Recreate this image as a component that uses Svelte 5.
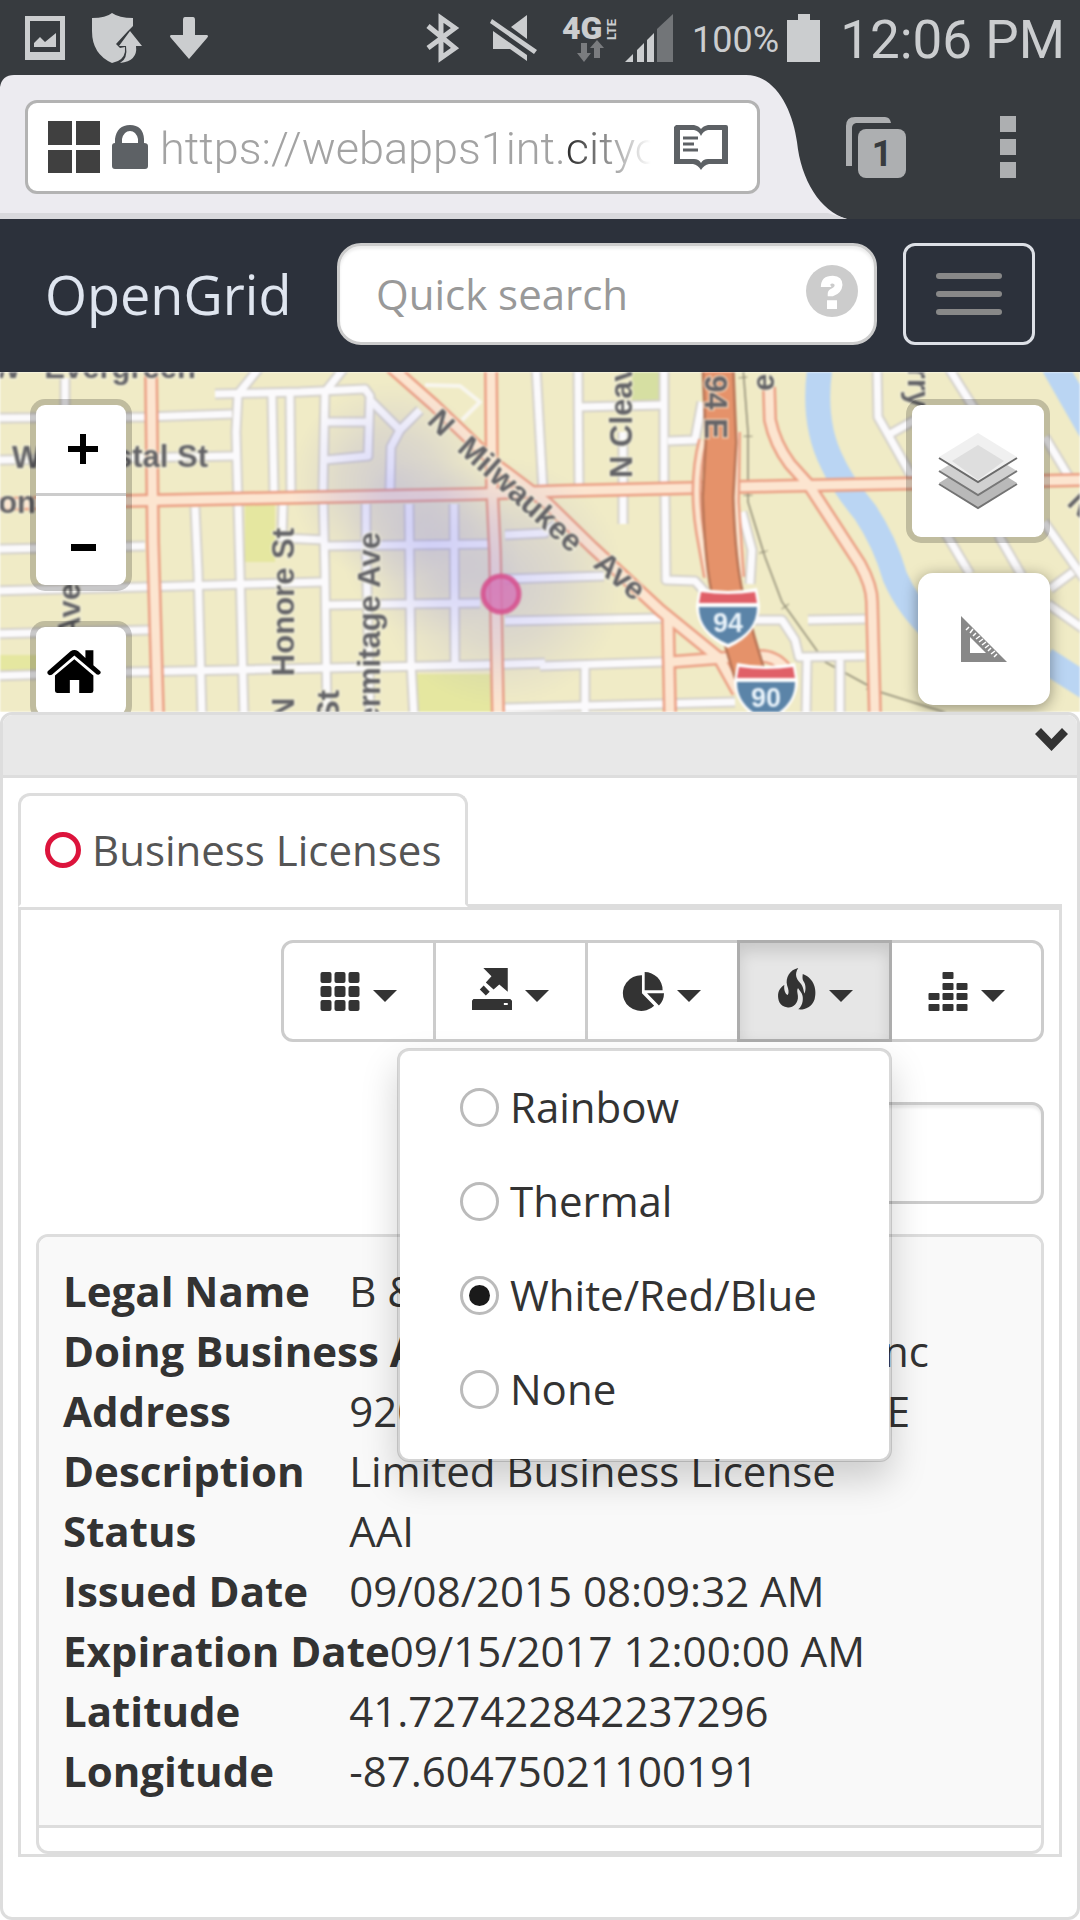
<script>
  let heat = $state('White/Red/Blue');
  const heatOptions = ['Rainbow', 'Thermal', 'White/Red/Blue', 'None'];

  const record = [
    ['Legal Name', 'B & M Transportation Inc'],
    ['Doing Business As', 'B & M Transportation Inc'],
    ['Address', '9206 S COTTAGE GROVE AVE'],
    ['Description', 'Limited Business License'],
    ['Status', 'AAI'],
    ['Issued Date', '09/08/2015 08:09:32 AM'],
    ['Expiration Date', '09/15/2017 12:00:00 AM'],
    ['Latitude', '41.727422842237296'],
    ['Longitude', '-87.60475021100191'],
  ];

  const tools = ['Columns', 'Export', 'Charts', 'Heat map', 'Graph'];

  const streets = [
    'M65 6 L65 200', 'M-5 46 L145 45 L232 42', 'M-5 88 L235 84', 'M-5 177 L145 174',
    'M-5 219 L145 215 L322 210', 'M-5 262 L150 258', 'M-5 304 L128 300 L480 293 L545 291',
    'M215 22 L300 20 L365 17 L370 24 L368 84 L325 88', 'M260 -5 L238 22 L236 60 L240 200 L244 345',
    'M272 22 L274 122', 'M290 22 L291 122', 'M345 -5 L325 20 L323 120 L325 200 L327 345',
    'M325 50 L368 50', 'M370 28 L400 58 L420 38', 'M400 58 L391 75 L390 118',
    'M283 133 L282 166 L325 168', 'M195 135 L198 200 L202 345', 'M366 132 L366 170 L370 345',
    'M409 132 L411 290 L414 345', 'M454 132 L455 292', 'M325 174 L490 172', 'M328 233 L480 231',
    'M505 163 L545 161 L556 152', 'M505 207 L604 204', 'M505 249 L662 246', 'M536 -5 L543 118',
    'M578 -5 L579 116', 'M664 -5 L664 116', 'M578 35 L662 33', 'M623 60 L623 152',
    'M665 124 L666 208 L695 209 L705 220', 'M668 69 L695 68 L702 30',
    'M877 -5 L878 45 L890 66 L912 105 L970 202', 'M890 62 L915 48', 'M948 -5 L975 38 L1000 166 L1022 204',
    'M1045 65 L1072 110', 'M1044 150 L1085 208', 'M1050 217 L1073 200', 'M1048 232 L1085 258',
    'M755 248 L782 248 L795 268 L799 285 L865 284', 'M808 248 L865 247', 'M540 294 L662 290',
    'M505 336 L735 330', 'M585 292 L585 345', 'M807 288 L806 345', 'M840 288 L840 345',
    'M742 140 L752 178 L750 212',
  ];
  const avenues = [
    'M151 -5 L153 170 L158 345', 'M-5 132 L126 129 L480 122 L560 119 L780 114 L1085 108',
    'M491 -5 L492 115 L495 180 L498 345', 'M383 -12 L434 33 L499 95 L547 131 L592 175 L660 238 L719 286 L738 320',
    'M668 243 L670 345', 'M670 290 L735 285', 'M769 15 L770 48 Q775 72 790 92 L808 112 L860 192 Q872 214 872 230 L875 345',
    'M760 284 Q775 284 785 296',
  ];
  const ramps = ['M703 68 Q692 110 700 160 L708 205', 'M736 60 L735 130 L740 205'];
  const labels = [
    { x: -8, y: 6, a: 0, t: 'W' },
    { x: 196, y: 6, a: 0, t: 'Evergreen', end: true },
    { x: 12, y: 96, a: 0, t: 'W' },
    { x: 208, y: 95, a: 0, t: 'Crystal St', end: true },
    { x: 36, y: 141, a: 0, t: 'W Division', end: true },
    { x: 80, y: 211, a: -90, t: 'N Wood Ave', end: true },
    { x: 294, y: 156, a: -90, t: 'Honore St', end: true },
    { x: 294, y: 348, a: -90, t: 'N' },
    { x: 339, y: 318, a: -90, t: 'N Wood St', end: true },
    { x: 380, y: 160, a: -90, t: 'N Hermitage Ave', end: true },
    { x: 632, y: 106, a: -90, t: 'N Cleaver St' },
    { x: 705, y: 67, a: 90, t: 'I 94 E', end: true },
    { x: 774, y: 19, a: -90, t: 'e' },
    { x: 908, y: 36, a: 90, t: 'N Cherry', end: true },
    { x: 426, y: 50, a: 45, t: 'N' },
    { x: 456, y: 78, a: 42, t: 'Milwaukee' },
    { x: 592, y: 194, a: 40, t: 'Ave' },
    { x: 1066, y: 132, a: 45, t: 'N' },
  ];
  const shields = [{ x: 697, y: 216, n: '94' }, { x: 735, y: 291, n: '90' }];
</script>

<div class="screen">
  <div class="status">
    <svg class="picture" viewBox="0 0 40 44"><path fill-rule="evenodd" d="M0 0H40V44H0ZM5 5V36H35V5Z"/><path d="M9 27L15 21 20 26 31 17V31H9Z"/></svg>
    <svg class="shield" viewBox="0 0 50 50"><path d="M0 5Q14 5 20 0 27 5 41 5V13L36 18 24 31 28 35 33 34Q34 44 26 48L20 50Q0 41 0 18Z"/><path d="M38 18L50 33H44Q46 48 28 50 36 46 34 33H27Z"/></svg>
    <svg class="down" viewBox="0 0 38 42"><path d="M15 0H23Q25 0 25 3V18H37Q39 19 37 21L19 42 1 21Q-1 19 1 18H13V3Q13 0 15 0Z"/></svg>
    <svg class="bluetooth" viewBox="0 0 33 48"><path d="M2 12L29 34 15 44V4L29 14 2 34" fill="none" stroke="currentColor" stroke-width="5"/></svg>
    <svg class="mute" viewBox="0 0 47 46"><path d="M37 0V24L21 12ZM3 16L37 40V46L20 34H3ZM2 4L47 35 44 39 0 8Z"/></svg>
    <svg class="network" viewBox="0 0 54 48"><text x="0" y="25" font-size="32" font-weight="900">4G</text><text transform="translate(54 26) rotate(-90)" font-size="13" font-weight="700">LTE</text><g opacity=".45"><path d="M19 29H25V39H29L22 48 15 39H19ZM32 44H38V34H42L35 26 28 34H32Z"/></g></svg>
    <svg class="signal" viewBox="0 0 48 48"><path d="M0 48L8 40V48ZM12 36L19 29V48H12ZM22 26L29 19V48H22Z"/><path opacity=".4" d="M32 15L48 0V48H32Z"/></svg>
    <span class="percent">100%</span>
    <svg class="battery" viewBox="0 0 33 48"><path d="M11 0H23V6H33V48H0V6H11Z"/></svg>
    <span class="clock">12:06 PM</span>
  </div>

  <div class="browser">
    <svg class="tabshape" viewBox="0 0 1080 144" preserveAspectRatio="none"><path fill="#ecebf0" d="M0 144V12Q2 0 14 0H746C776 0 793 36 797 67C801 105 820 136 847 144Z"/><path fill="#d9d9dd" d="M0 138H828L847 144H0Z"/></svg>
    <div class="address">
      <svg class="tiles" viewBox="0 0 52 52"><path d="M0 0H24V24H0ZM28 0H52V24H28ZM0 29H24V52H0ZM28 29H52V52H28Z"/></svg>
      <svg class="lock" viewBox="0 0 36 44"><path fill-rule="evenodd" d="M3 18V14Q5 0 18 0T32 14V18Q36 18 36 21V41Q36 44 33 44H3Q0 44 0 41V21Q0 18 3 18ZM10 18H26V14Q24 6 18 6T10 14Z"/></svg>
      <a class="url" href="#site">https://webapps1int.<b>cityofchicago.org</b></a>
      <button class="reader" aria-label="Reader view"><svg viewBox="0 0 54 45"><path fill-rule="evenodd" d="M2 0H20Q25 1 27 4 29 1 34 0H52Q54 0 54 2V39H35Q30 40 27 45 24 40 19 39H0V2ZM6 5V34H20Q25 34 27 38 29 34 34 34H48V5H34Q29 6 27 11 25 6 20 5Z"/><path d="M9 13H24M9 19H20M9 25H24" fill="none" stroke="currentColor" stroke-width="3"/></svg></button>
    </div>
    <button class="tabs" aria-label="Tabs"><svg viewBox="0 0 60 61"><path d="M0 49V9Q0 0 9 0H39Q44 0 45 6H10Q6 7 6 11V49Z"/><rect x="12" y="12" width="48" height="49" rx="8"/><text x="36" y="49" text-anchor="middle">1</text></svg></button>
    <button class="more" aria-label="More"><i></i><i></i><i></i></button>
  </div>

  <header>
    <a class="brand" href="#home">OpenGrid</a>
    <label class="quick"><input type="text" placeholder="Quick search" aria-label="Quick search" />
      <svg viewBox="772 150 151 156" preserveAspectRatio="none"><ellipse cx="847.500" cy="228" rx="75.500" ry="78"/><path fill="#fff" d="M833 256H862V282H833ZM815 216Q815 182 850 182 878 183 878 210 876 235 850 244H835V236Q835 226 848 220 858 214 854 208 848 203 842 209L846 216Z"/></svg>
    </label>
    <button class="burger" aria-label="Menu"><i></i><i></i><i></i></button>
  </header>

  <section class="map" aria-label="Map">
    <svg class="canvas" viewBox="0 0 1080 340" preserveAspectRatio="xMidYMid slice">
      <defs>
        <radialGradient id="heat"><stop offset="0" stop-color="#7474f0" stop-opacity=".25"/><stop offset=".5" stop-color="#7777e8" stop-opacity=".15"/><stop offset="1" stop-color="#8888e0" stop-opacity="0"/></radialGradient>
      </defs>
      <rect width="1080" height="340" fill="#f0ebc6"/>
      <path fill="#e5e7a0" d="M245 133H275V190H245ZM417 302H492V340H417ZM0 283H40V298H0Z"/>
      <path fill="#d6dfa2" d="M632 0H660V28H632Z"/>
      <path d="M820 -5Q812 50 832 90 842 112 865 140 885 170 895 205 908 235 935 260" fill="none" stroke="#bad5f3" stroke-width="25"/>
      <path d="M1052 -10L1092 60M1045 288L1092 318" fill="none" stroke="#bad5f3" stroke-width="26"/>
      <g fill="none" stroke="#8f8b75" stroke-width="1.500"><path d="M743 -5L748 60 748 130 765 185 782 230 825 290 880 320 960 345"/><path stroke-width="9" stroke-dasharray="1 58" d="M743 5L748 60 748 130 765 185 782 230 825 290 880 320"/></g>
      <g fill="none" stroke-linejoin="round">
        {#each streets as d}<path {d} stroke="#d3d0ca" stroke-width="11"/>{/each}
        {#each streets as d}<path {d} stroke="#fbfafc" stroke-width="7"/>{/each}
        <path d="M425 13L460 14 480 30 462 48" stroke="#f8f6ee" stroke-width="4"/>
        {#each avenues as d}<path {d} stroke="#eb9f84" stroke-width="14"/>{/each}
        {#each avenues as d}<path {d} stroke="#fce5d0" stroke-width="9"/>{/each}
        {#each ramps as d}<path {d} stroke="#eb9f84" stroke-width="10"/><path {d} stroke="#fce5d0" stroke-width="5"/>{/each}
        <path d="M718 -5L721 70 718 125Q720 190 728 225L740 270 752 310" stroke="#b87455" stroke-width="33"/>
        <path d="M718 -5L721 70 718 125Q720 190 728 225L740 270 752 310" stroke="#e5926a" stroke-width="28"/>
      </g>
      <circle cx="390" cy="110" r="100" fill="url(#heat)"/>
      <circle cx="430" cy="175" r="90" fill="url(#heat)" opacity=".7"/>
      <circle cx="500" cy="210" r="125" fill="url(#heat)"/>
      {#each labels as l}
        <text class="street" text-anchor={l.end ? 'end' : 'start'} transform="translate({l.x} {l.y}) rotate({l.a})">{l.t}</text>
      {/each}
      {#each shields as s}
        <g transform="translate({s.x} {s.y})">
          <path fill="#fff" d="M2 0Q31 6 60 0L63 18Q62 46 31 60 0 46 -1 18Z"/>
          <path fill="#e06068" d="M4 4Q31 8 58 4L60 15H2Z"/>
          <path fill="#5b84a8" d="M2 19H60Q60 44 31 56 2 44 2 19Z"/>
          <text class="route" x="31" y="44" text-anchor="middle">{s.n}</text>
        </g>
      {/each}
      <circle cx="501" cy="222" r="18" fill="#d472b4" fill-opacity=".8" stroke="#d64f8c" stroke-opacity=".85" stroke-width="5"/>
    </svg>
    <div class="left">
      <div class="ctl zoom">
        <button aria-label="Zoom in"><svg viewBox="0 0 30 30"><path d="M12 0H18V12H30V18H18V30H12V18H0V12H12Z"/></svg></button>
        <button aria-label="Zoom out"><svg viewBox="0 0 30 30"><path d="M3 18H28V25H3Z"/></svg></button>
      </div>
      <div class="ctl home">
        <button aria-label="Home"><svg viewBox="136 842 156 130" preserveAspectRatio="none"><path d="M204 846Q215 838 226 846L247 866V843H270V888L290 906Q294 912 285 917L280 916 215 859 150 917 144 918Q134 914 138 906ZM215 870L270 919V965Q270 972 263 972H229V933H202V972H165Q159 971 159 965V919Z"/></svg></button>
      </div>
    </div>
    <div class="right">
      <button class="layers" aria-label="Layers"><svg viewBox="0 0 78 76"><path fill="#b9b9b9" d="M0 50L39 26 78 50 39 75Z"/><path d="M0 51L39 75 78 51" fill="none" stroke="#737373" stroke-width="2"/><path fill="#d0d0d0" d="M0 38L39 14 78 38 39 62Z"/><path d="M0 38L39 62 78 38" fill="none" stroke="#777" stroke-width="2"/><path fill="#f0f0f0" d="M0 24L39 0 78 24 39 49Z"/><path fill="#dedede" d="M13 28L39 12 65 28 39 47Z"/><path d="M0 25L39 49 78 25" fill="none" stroke="#6b6b6b" stroke-width="2"/></svg></button>
      <button class="ruler" aria-label="Measure"><svg viewBox="0 0 46 46"><path fill-rule="evenodd" d="M0 0L46 46H0ZM9 21V37H25Z"/><path d="M5 14L8 11M9 17L12 13M12 20L15 17M15 23L19 20M18 26L22 23M21 29L25 26M24 32L28 29M27 35L30 32M30 38L34 35M33 41L36 38" stroke="#fff" stroke-width="1.500"/></svg></button>
    </div>
  </section>

  <main>
    <div class="heading"><button aria-label="Collapse"><svg viewBox="0 0 33 23"><path d="M6 0L16.500 11 27 0 33 6 16.500 23 0 6Z"/></svg></button></div>
    <div class="body">
      <nav><a href="#licenses"><span class="ring"></span>Business Licenses</a></nav>
      <div class="pane">
        <div class="toolbar">
          <div class="group">
            {#each tools as name, i}
              <button aria-label={name} class:active={i === 3}>
                {#if i === 0}
                  <svg viewBox="0 0 39 39">{#each [0, 14, 28] as y}{#each [0, 14, 28] as x}<rect {x} {y} width="11" height="11" rx="2"/>{/each}{/each}</svg>
                {:else if i === 1}
                  <svg class="tall" viewBox="1371 803 113 127" preserveAspectRatio="none"><path fill-rule="evenodd" d="M1375 897H1479L1484 902V930H1371V902ZM1461 909V915H1472V909ZM1403 803H1472V875L1448 853 1432 868 1410 847 1426 828ZM1393 868L1404 856 1421 875 1410 886Z"/></svg>
                {:else if i === 2}
                  <svg viewBox="244 812 118 118" preserveAspectRatio="none"><path d="M297 822V876L333 914A54 54 0 1 1 297 822ZM305 812A53 55 0 0 1 358 867H305ZM312 876H362Q362 898 347 913Z"/></svg>
                {:else if i === 3}
                  <svg class="tall" viewBox="688 800 115 128" preserveAspectRatio="none"><path d="M752 800C740 820 747 833 757 845C768 858 766 868 770 878C775 865 773 850 768 842C763 835 764 825 765 818C800 832 806 870 799 895C790 922 768 928 752 926C766 915 768 890 762 878C756 868 752 862 751 862C747 868 750 875 751 885C753 908 735 922 722 920C697 918 693 895 694 880C696 865 705 856 712 852C710 865 714 880 722 882C726 875 724 865 720 853C714 830 728 805 752 800Z"/></svg>
                {:else}
                  <svg viewBox="0 0 39 39">{#each [[0, 32], [0, 21], [14, 32], [14, 21], [14, 11], [14, 0], [28, 32], [28, 21], [28, 11]] as [x, y]}<rect {x} {y} width="11" height="7" rx="1"/>{/each}</svg>
                {/if}
                <span class="caret"></span>
              </button>
            {/each}
          </div>
          <div class="menu">
            {#each heatOptions as o}
              <label><input type="radio" name="heat" value={o} bind:group={heat} />{o}</label>
            {/each}
          </div>
        </div>
        <div class="filter"><input type="text" aria-label="Filter records" /></div>
        <div class="card">
          <dl>
            {#each record as [k, v]}
              <div><dt>{k}</dt><dd>{v}</dd></div>
            {/each}
          </dl>
          <div class="foot"></div>
        </div>
      </div>
    </div>
  </main>
</div>

<style>
  :global(body) { margin: 0; background: #fff; }
  .screen { font: 42px/60px "Open Sans", "Noto Sans", sans-serif; color: #333; overflow: hidden; }
  * { box-sizing: border-box; }
  svg { display: block; flex: none; fill: currentColor; overflow: visible; }
  button { font: inherit; color: inherit; background: none; border: 0; padding: 0; margin: 0; flex: none; }
  a { color: inherit; text-decoration: none; }
  i { display: block; }

  .status { display: flex; align-items: center; height: 75px; padding: 0 15px 0 25px; background: #373b3f; color: #cbcdcf; font-family: Roboto, sans-serif; }
  .picture { width: 40px; height: 44px; }
  .shield { width: 50px; height: 50px; margin-left: 27px; }
  .down { width: 38px; height: 42px; margin-left: 28px; }
  .bluetooth { width: 33px; height: 48px; margin-left: auto; }
  .mute { width: 47px; height: 46px; margin-left: 31px; }
  .network { width: 54px; height: 48px; margin-left: 25px; }
  .signal { width: 48px; height: 48px; margin-left: 9px; }
  .percent { font-size: 36px; margin-left: 19px; padding-top: 4px; }
  .battery { width: 33px; height: 48px; margin-left: 8px; }
  .clock { font-size: 53px; margin-left: 20px; padding-top: 4px; white-space: nowrap; }

  .browser { position: relative; display: flex; align-items: center; height: 144px; padding: 0 64px 0 25px; background: #373b3f; color: #adafb1; font-family: Roboto, sans-serif; }
  .tabshape { position: absolute; inset: 0; width: 100%; height: 100%; }
  .address { position: relative; flex: 1; min-width: 0; display: flex; align-items: center; height: 94px; padding: 0 29px 0 20px; border: 3px solid #b3b3b3; border-radius: 12px; background: #fff; }
  .tiles { width: 52px; height: 52px; color: #404040; }
  .lock { width: 36px; height: 44px; margin-left: 12px; color: #5d6165; }
  .url { flex: 1; min-width: 0; margin: 0 23px 0 12px; padding-top: 3px; overflow: hidden; white-space: nowrap; font-size: 45px; font-weight: 300; color: #a3a3a3; mask-image: linear-gradient(90deg, #000 82%, transparent 100%); }
  .url b { font-weight: 300; color: #222; }
  .reader { color: #5d6165; }
  .reader svg { width: 54px; height: 45px; }
  .tabs { position: relative; margin-left: 86px; }
  .tabs svg { width: 60px; height: 61px; }
  .tabs text { font-size: 36px; font-weight: 700; fill: #373b3f; }
  .more { position: relative; display: grid; gap: 7px; margin-left: 94px; }
  .more i { width: 16px; height: 16px; background: #adafb1; }

  header { display: flex; align-items: center; gap: 26px; height: 153px; padding: 0 45px 3px; background: #2c313b; }
  .brand { flex: none; width: 266px; font-size: 54px; color: #dfe5ef; }
  .quick { flex: 1; min-width: 0; display: flex; align-items: center; height: 102px; padding: 0 16px 0 36px; border: 3px solid #ccc; border-radius: 24px; background: #fff; box-shadow: inset 0 3px 3px rgba(0, 0, 0, .075); }
  .quick input { flex: 1; min-width: 0; border: 0; padding: 0; outline: 0; background: none; font: inherit; }
  .quick input::placeholder { color: #999; opacity: 1; }
  .quick svg { width: 52px; height: 52px; margin-bottom: 6px; color: #ccc; }
  .burger { display: grid; justify-content: center; align-content: center; gap: 12px; width: 132px; height: 102px; border: 3px solid #dde0e6; border-radius: 12px; }
  .burger i { width: 66px; height: 6px; border-radius: 3px; background: #888; }

  .map { position: relative; height: 340px; overflow: hidden; }
  .canvas { width: 100%; height: 100%; overflow: hidden; filter: blur(1px); }
  .street { font: 700 31px "Liberation Sans", sans-serif; fill: #636367; stroke: #f4f1de; stroke-width: 3px; stroke-opacity: .6; paint-order: stroke; }
  .route { font: 700 27px "Liberation Sans", sans-serif; fill: #eaf4fb; }
  .left { position: absolute; left: 30px; top: 27px; display: grid; gap: 30px; }
  .right { position: absolute; right: 30px; top: 27px; display: grid; gap: 30px; justify-items: end; }
  .ctl { width: 102px; border: 6px solid rgba(0, 0, 0, .2); border-radius: 15px; background: #fff; background-clip: padding-box; color: #000; }
  .ctl button { display: flex; justify-content: center; align-items: center; width: 90px; height: 88px; }
  .zoom button { padding-left: 4px; }
  .ctl button + button { height: 92px; border-top: 3px solid #ccc; }
  .zoom svg { width: 30px; height: 30px; }
  .home button { justify-content: flex-start; padding-left: 11px; }
  .home svg { width: 54px; height: 43px; }
  .layers, .ruler { display: grid; place-items: center; background: #fff; background-clip: padding-box; border-radius: 15px; }
  .layers { width: 144px; height: 144px; border: 6px solid rgba(0, 0, 0, .2); }
  .layers svg { width: 78px; height: 76px; }
  .ruler { width: 132px; height: 132px; color: #888; box-shadow: 0 3px 15px rgba(0, 0, 0, .4); }
  .ruler svg { width: 46px; height: 46px; }

  main { border: 3px solid #ddd; border-radius: 12px; background: #fff; }
  .heading { display: flex; justify-content: flex-end; align-items: flex-start; height: 63px; padding: 13px 9px; background: #e8e8e8; border-bottom: 3px solid #ddd; border-radius: 9px 9px 0 0; }
  .heading svg { width: 33px; height: 23px; }
  .body { padding: 15px 15px 60px; }
  nav { display: flex; border-bottom: 3px solid #ddd; }
  nav a { display: flex; align-items: center; gap: 11px; margin-bottom: -3px; padding: 24px; border: 3px solid #ddd; border-bottom-color: #fff; border-radius: 12px 12px 0 0; background: #fff; color: #555; }
  .ring { width: 36px; height: 36px; border: 5px solid #dc143c; border-radius: 50%; }
  .pane { padding: 30px 15px 0; border: 3px solid #ddd; }
  .toolbar { position: relative; display: flex; justify-content: flex-end; }
  .group { display: flex; }
  .group button { display: flex; align-items: center; gap: 13px; height: 102px; padding: 0 36px; border: 3px solid #ccc; }
  .group button + button { margin-left: -3px; }
  .group button:first-child { border-radius: 12px 0 0 12px; }
  .group button:last-child { border-radius: 0 12px 12px 0; }
  .group .active { position: relative; background: #e6e6e6; border-color: #adadad; box-shadow: inset 0 9px 15px rgba(0, 0, 0, .125); }
  .group svg { width: 40px; height: 39px; }
  .group svg.tall { height: 42px; margin-bottom: 4px; }
  .caret { margin-top: 10px; border: 12px solid transparent; border-top-color: #333; border-bottom: 0; }
  .menu { position: absolute; z-index: 2; top: 108px; right: 152px; width: 495px; padding: 9px 0 23px 60px; border: 3px solid rgba(0, 0, 0, .15); border-radius: 12px; background: #fff; background-clip: padding-box; box-shadow: 0 18px 36px rgba(0, 0, 0, .175); }
  .menu label { display: flex; align-items: center; gap: 11px; height: 94px; }
  .menu input { appearance: none; flex: none; display: grid; place-items: center; width: 39px; height: 39px; margin: 0; border: 3px solid #bbb; border-radius: 50%; background: #fff; }
  .menu input:checked::after { content: ""; width: 21px; height: 21px; border-radius: 50%; background: #1a1a1a; }
  .filter { display: flex; justify-content: flex-end; margin: 60px 0 30px; }
  .filter input { width: 50%; height: 102px; padding: 0 36px; border: 3px solid #ccc; border-radius: 12px; background: #fff; font: inherit; box-shadow: inset 0 3px 3px rgba(0, 0, 0, .075); }
  .card { border: 3px solid #ddd; border-radius: 12px; overflow: hidden; }
  dl { margin: 0; padding: 24px; background: #f9f9f9; border-bottom: 3px solid #ddd; }
  dl div { display: flex; white-space: nowrap; }
  dt { min-width: 30%; font-weight: 700; }
  dd { margin: 0; }
  .foot { height: 23px; }
</style>
